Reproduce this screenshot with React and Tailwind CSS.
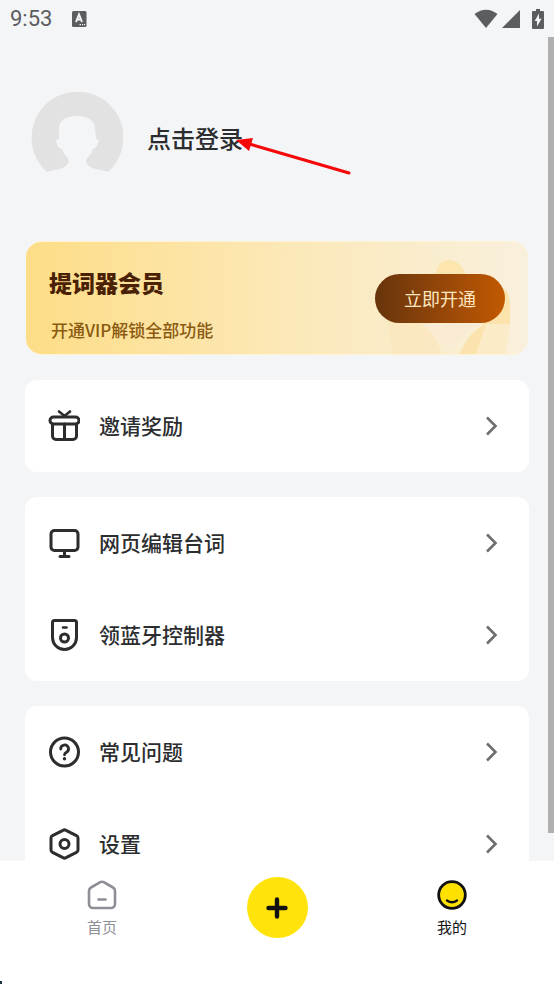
import { clsx } from "clsx";

function GiftIcon() {
  return (
    <svg viewBox="0 0 32 32" className="size-8" fill="none" stroke="currentColor" strokeWidth="3" strokeLinecap="round" strokeLinejoin="round" aria-hidden="true">
      <path d="M11 1.500l5.500 4.500L22 1.500" strokeWidth="2.600" />
      <rect x="2" y="7" width="29" height="7" rx="3.500" />
      <path d="M4.500 14v12a3.500 3.500 0 0 0 3.500 3.500h17a3.500 3.500 0 0 0 3.500-3.500V14M16.500 14v15" />
    </svg>
  );
}

function MonitorIcon() {
  return (
    <svg viewBox="0 0 32 32" className="size-8" fill="none" stroke="currentColor" strokeWidth="3" strokeLinecap="round" strokeLinejoin="round" aria-hidden="true">
      <rect x="3" y="3.500" width="27" height="20" rx="3.500" />
      <path d="M16.500 24v5M12 29.500h9" />
    </svg>
  );
}

function RemoteIcon() {
  return (
    <svg viewBox="0 0 32 32" className="size-8" fill="none" stroke="currentColor" strokeWidth="3" strokeLinecap="round" strokeLinejoin="round" aria-hidden="true">
      <path d="M6.500 1.500h20a2 2 0 0 1 2 2v15a12 12 0 0 1-24 0v-15a2 2 0 0 1 2-2z" />
      <path d="M15 8.500h3.500" strokeWidth="2.500" />
      <circle cx="16.500" cy="19" r="4" />
    </svg>
  );
}

function QuestionIcon() {
  return (
    <svg viewBox="0 0 32 32" className="size-8" fill="none" stroke="currentColor" strokeWidth="3" strokeLinecap="round" strokeLinejoin="round" aria-hidden="true">
      <circle cx="16.500" cy="16" r="14" />
      <path d="M12.700 13a3.900 3.900 0 1 1 5.800 3.300c-1.300.8-2 1.300-2 2.500" strokeWidth="2.800" />
      <circle cx="16.500" cy="22.700" r="1.700" fill="currentColor" stroke="none" />
    </svg>
  );
}

function SettingsIcon() {
  return (
    <svg viewBox="0 0 32 32" className="size-8" fill="none" stroke="currentColor" strokeWidth="3" strokeLinecap="round" strokeLinejoin="round" aria-hidden="true">
      <path d="M15 2.300a3 3 0 0 1 3 0l10.500 5.400a2.500 2.500 0 0 1 1.500 2.300v12a2.500 2.500 0 0 1-1.500 2.300L18 29.700a3 3 0 0 1-3 0L4.500 24.300A2.500 2.500 0 0 1 3 22V10a2.500 2.500 0 0 1 1.500-2.300z" />
      <circle cx="16.500" cy="16" r="4.500" />
    </svg>
  );
}

function HomeIcon() {
  return (
    <svg viewBox="0 0 32 32" className="size-8" fill="none" stroke="currentColor" strokeWidth="2.600" strokeLinecap="round" strokeLinejoin="round" aria-hidden="true">
      <path d="M14.300 3.200a3.500 3.500 0 0 1 3.400 0l9.300 5.300a4 4 0 0 1 2 3.500v13a4 4 0 0 1-4 4H7a4 4 0 0 1-4-4V12a4 4 0 0 1 2-3.500z" />
      <path d="M12.500 20.500h7" />
    </svg>
  );
}

function SmileIcon() {
  return (
    <svg viewBox="0 0 32 32" className="size-8" fill="none" stroke="#111" strokeWidth="2.800" strokeLinecap="round" aria-hidden="true">
      <circle cx="16" cy="16" r="13.300" fill="#ffe100" />
      <path d="M11 21.500q5 3.500 10 0" strokeWidth="2.400" />
    </svg>
  );
}

const menuGroups = [
  [{ label: "邀请奖励", icon: GiftIcon }],
  [
    { label: "网页编辑台词", icon: MonitorIcon },
    { label: "领蓝牙控制器", icon: RemoteIcon },
  ],
  [
    { label: "常见问题", icon: QuestionIcon },
    { label: "设置", icon: SettingsIcon },
  ],
];

function StatusBar() {
  return (
    <header className="flex h-[37px] shrink-0 items-center px-2.5 text-[#5c5d5f]">
      <time className="font-['Roboto',sans-serif] text-[22px] leading-none">9:53</time>
      <svg viewBox="0 0 16 16" className="ml-[19px] size-4" aria-hidden="true">
        <rect x="1" width="14.500" height="16" rx="1.500" fill="currentColor" />
        <path d="M5 11 8 3.500l3 7.500M6 8.500h4" fill="none" stroke="#f4f5f7" strokeWidth="2" />
        <path d="M8.500 13.700H10M11 13.700h1.200M13 13.700h1" stroke="#f4f5f7" strokeWidth="1.200" />
      </svg>
      <div className="ml-auto flex items-center gap-1">
        <svg viewBox="0 0 24 20" className="h-5 w-6" fill="currentColor" aria-hidden="true">
          <path d="M12 19 .500 5Q12-3.500 23.500 5z" />
        </svg>
        <svg viewBox="0 0 18 20" className="h-5 w-[18px]" fill="currentColor" aria-hidden="true">
          <path d="M18 1v18H0z" />
        </svg>
        <svg viewBox="0 0 12 20" className="ml-2 h-5 w-3" fill="currentColor" aria-hidden="true">
          <path d="M4 0h4v2h3q1 0 1 1v16q0 1-1 1H1q-1 0-1-1V3q0-1 1-1h3z" />
          <path d="M7 4.500v5.300h2.500L5 17.500v-5.500H2.700z" fill="#f4f5f7" />
        </svg>
      </div>
    </header>
  );
}

function Avatar() {
  return (
    <svg viewBox="0 0 92 92" className="size-[92px]" aria-hidden="true">
      <path
        fill="#e2e2e3"
        d="M16 80A46 46 0 1 1 77 80C70 77 61 78 57 73Q54 70 56 66Q60 63 62 57Q65 56 66 54L68 48Q67 47 65 47L64 36Q62 24 46 24Q29 24 28 36V47Q25 47 25 49L27 55Q29 57 31 57Q33 63 37 66Q39 70 36 73C32 78 23 77 16 80Z"
      />
    </svg>
  );
}

function Profile() {
  return (
    <section className="relative flex items-center px-1.5 pt-[55px] pb-[57px]">
      <button type="button" className="flex items-center gap-6 text-[24px] leading-9 font-medium text-[#2c2d2f]">
        <Avatar />
        点击登录
      </button>
      <svg viewBox="0 0 116 40" className="absolute top-[99px] left-[211px] h-10 w-[116px]" aria-hidden="true">
        <path d="M10 7 113 37" stroke="#f50808" strokeWidth="3" strokeLinecap="round" />
        <path d="M0 4 17 2 13 15z" fill="#f50808" />
      </svg>
    </section>
  );
}

function VipCard() {
  return (
    <section className="relative mx-px flex h-[114px] items-center justify-between overflow-hidden rounded-2xl border-y border-[#fff3d2] bg-linear-to-r from-[#fddd86] via-[#fce8b6] to-[#f9f0dd] px-[23px]">
      <svg viewBox="0 0 150 114" className="absolute right-0 bottom-0 h-[114px] w-[150px]" aria-hidden="true">
        <path d="M56 42Q58 20 71 20Q84 20 91 42z" fill="#fce5ae" />
        <path d="M10 78Q30 68 50 80L64 114H14z" fill="#fce4b5" opacity="0.5" />
        <path d="M44 84H98L72 110z" fill="#faebd5" />
        <path d="M112 50Q130 42 132 62V84H104z" fill="#fce3ab" />
        <path d="M104 84H132L128 114H80z" fill="#fbe7bd" opacity="0.6" />
        <path d="M108 84Q90 92 82 114H98Z" fill="#fbe3ae" />
      </svg>
      <div className="relative pt-3">
        <h2 className="text-[23px] leading-8 font-black text-[#4a2104]">提词器会员</h2>
        <p className="mt-5 ml-0.5 text-[17px] leading-6 font-medium text-[#8a5a10]">开通VIP解锁全部功能</p>
      </div>
      <button type="button" className="relative h-[49px] w-[130px] rounded-full bg-linear-to-r from-[#68340b] to-[#c25900] text-[18px] text-[#ffe7c2]">
        立即开通
      </button>
    </section>
  );
}

function MenuRow({ label, icon: Icon }) {
  return (
    <button type="button" className="flex h-[92px] w-full items-center pr-[31px] pl-[23px] text-left text-[#2c2d2f]">
      <Icon />
      <span className="ml-[19px] pb-0.5 text-[21px] leading-8 font-medium">{label}</span>
      <svg viewBox="0 0 14 20" className="ml-auto h-5 w-3.5" fill="none" stroke="#6d6e70" strokeWidth="2.600" aria-hidden="true">
        <path d="M3 1.500l8.500 8.500L3 18.500" />
      </svg>
    </button>
  );
}

function TabItem({ label, icon: Icon, active }) {
  return (
    <button
      type="button"
      aria-current={active ? "page" : undefined}
      className={clsx("flex w-[204px] flex-col items-center gap-1 text-[15px] leading-6", active ? "text-[#111]" : "text-[#8e8e96]")}
    >
      <Icon />
      {label}
    </button>
  );
}

function TabBar() {
  return (
    <nav className="flex h-[123px] shrink-0 items-start justify-between bg-white pt-[18px]">
      <TabItem label="首页" icon={HomeIcon} />
      <button type="button" aria-label="新建" className="-mt-0.5 flex size-[61px] items-center justify-center rounded-full bg-[#ffe30b]">
        <svg viewBox="0 0 22 22" className="size-[22px]" stroke="#111" strokeWidth="4.400" strokeLinecap="round" aria-hidden="true">
          <path d="M11 2.500v17M2.500 11h17" />
        </svg>
      </button>
      <TabItem label="我的" icon={SmileIcon} active />
    </nav>
  );
}

export default function App() {
  return (
    <div className="relative flex h-screen flex-col overflow-hidden bg-[#f4f5f7] font-['Noto_Sans_CJK_SC',sans-serif]">
      <StatusBar />
      <main className="min-h-0 flex-1 overflow-hidden px-[25px]">
        <Profile />
        <VipCard />
        <div className="mt-[25px] flex flex-col gap-[25px]">
          {menuGroups.map((group) => (
            <section key={group[0].label} className="rounded-xl bg-white">
              {group.map((item) => (
                <MenuRow key={item.label} {...item} />
              ))}
            </section>
          ))}
        </div>
      </main>
      <TabBar />
      <div className="absolute top-[37px] right-0 bottom-[151px] w-1.5 bg-[#b0b0b0]" aria-hidden="true" />
      <div className="absolute bottom-0 left-0 h-[3px] w-0.5 bg-[#16323c]" aria-hidden="true" />
    </div>
  );
}
